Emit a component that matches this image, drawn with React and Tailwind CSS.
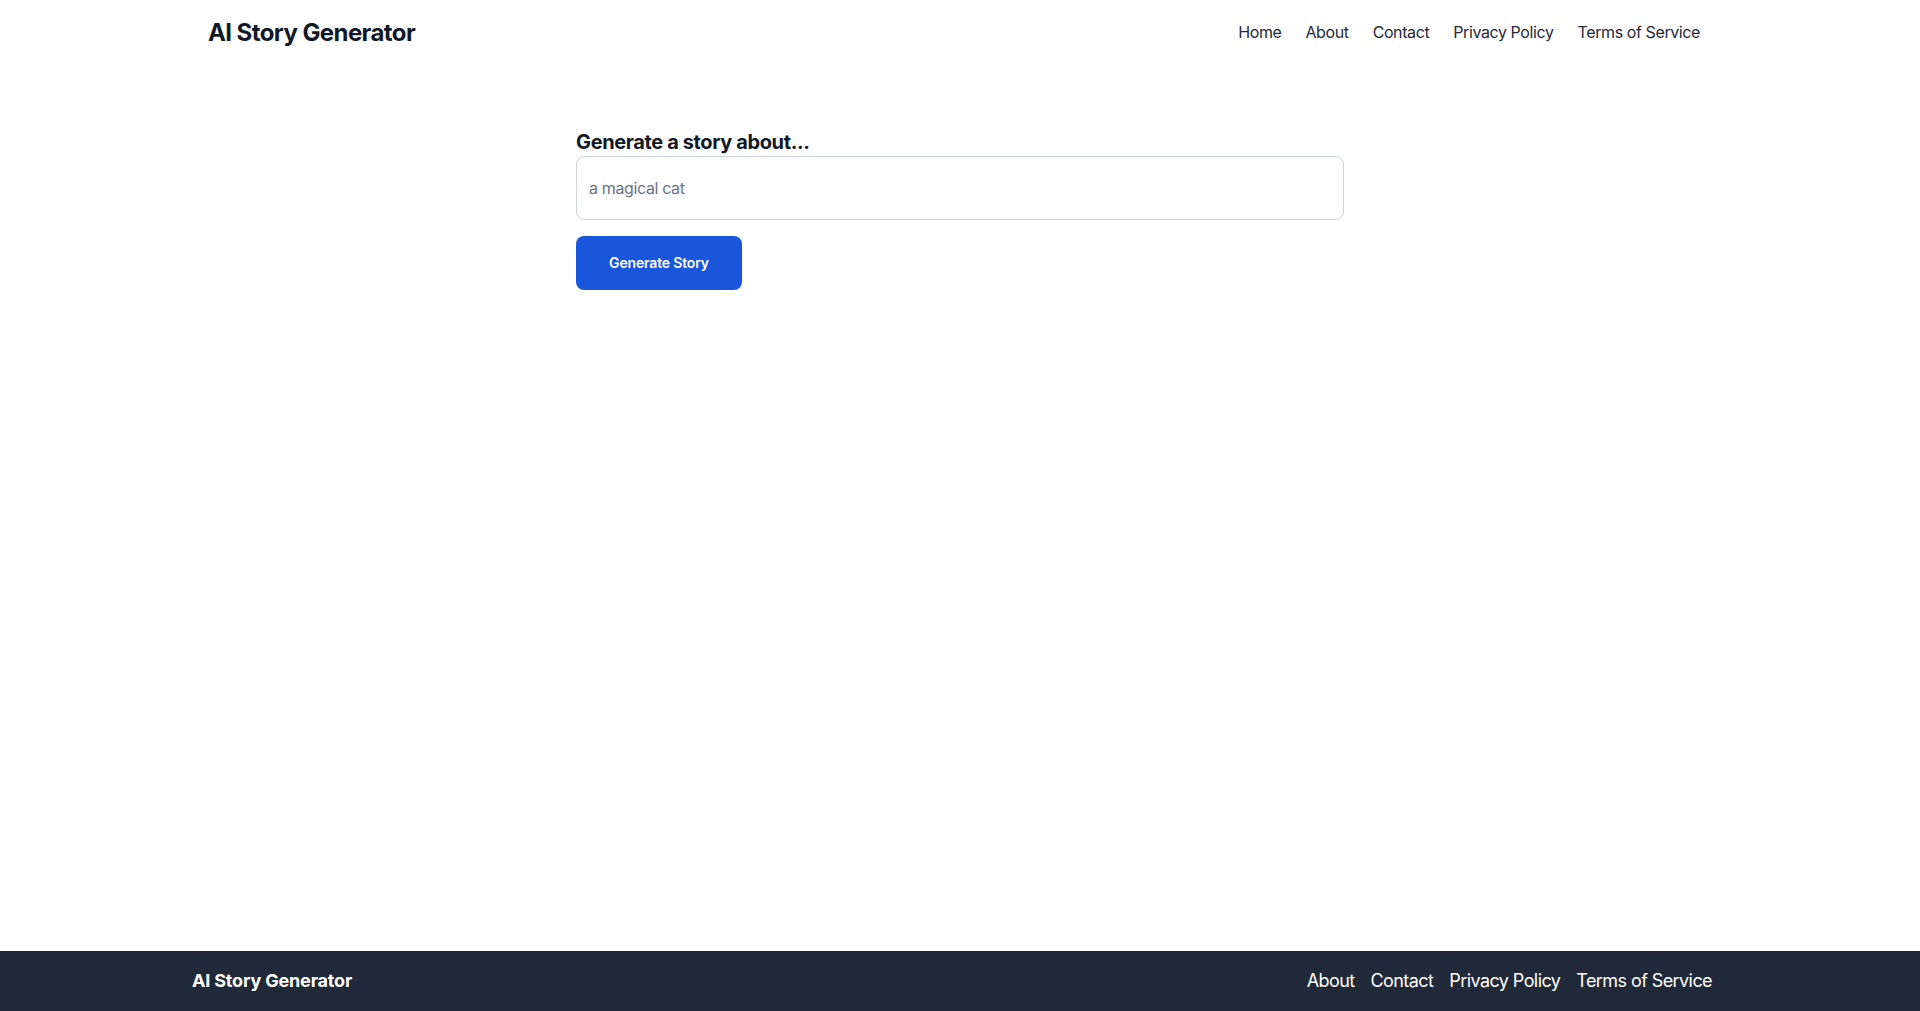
export default function App() {
  const headerLinks = ['Home', 'About', 'Contact', 'Privacy Policy', 'Terms of Service']
  const footerLinks = ['About', 'Contact', 'Privacy Policy', 'Terms of Service']

  return (
    <div className="min-h-screen flex flex-col bg-white font-['Inter',sans-serif]">
      <header className="bg-white">
        <div className="max-w-screen-2xl mx-auto w-full h-16 px-4 flex items-center justify-between">
          <a href="#" className="mt-0.5 text-2xl font-bold tracking-[-0.58px] text-[#111827]">AI Story Generator</a>
          <nav className="flex">
            {headerLinks.map((link) => (
              <a key={link} href="#" className="px-3 text-base tracking-[-0.4px] text-[#1f2937]">{link}</a>
            ))}
          </nav>
        </div>
      </header>

      <main className="flex-1 pt-16">
        <div className="max-w-3xl mx-auto">
          <label htmlFor="topic" className="block text-xl font-bold tracking-[-0.38px] text-[#111827]">Generate a story about...</label>
          <input
            id="topic"
            type="text"
            placeholder="a magical cat"
            className="block w-full h-16 px-3 border border-[#d1d5db] rounded-lg text-base tracking-[-0.37px] text-[#111827] placeholder:text-[#6b7280] outline-none"
          />
          <button type="button" className="mt-4 h-[54px] w-[166px] bg-[#1a56db] text-white text-sm font-semibold tracking-[-0.17px] rounded-lg">
            Generate Story
          </button>
        </div>
      </main>

      <footer className="bg-[#1f2937] text-white">
        <div className="max-w-screen-2xl mx-auto w-full h-[60px] flex items-center justify-between">
          <span className="text-lg font-bold tracking-[-0.17px]">AI Story Generator</span>
          <nav className="flex">
            {footerLinks.map((link) => (
              <a key={link} href="#" className="mr-4 text-lg tracking-[-0.58px]">{link}</a>
            ))}
          </nav>
        </div>
      </footer>
    </div>
  )
}
